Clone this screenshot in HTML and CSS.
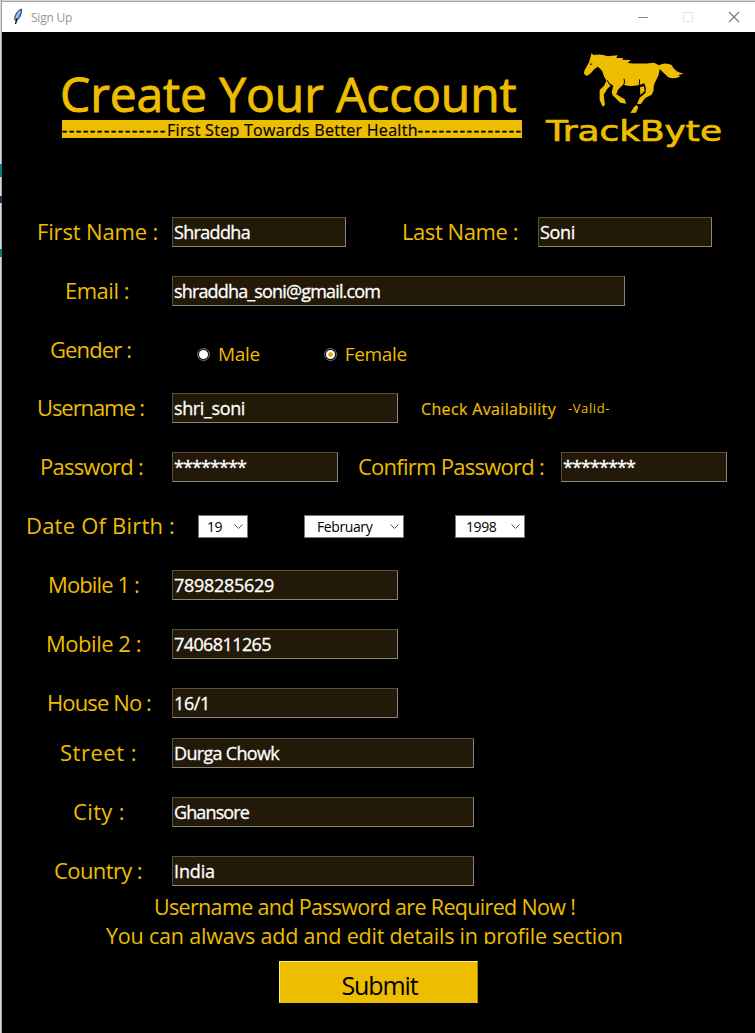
FILE: index.html
```html
<!DOCTYPE html>
<html lang="en">
<head>
<meta charset="utf-8">
<title>Sign Up</title>
<link rel="stylesheet" href="styles.css">
</head>
<body>
<div class="edge"><i class="mark m1"></i><i class="mark m2"></i><i class="mark m3"></i></div>
<div class="window">
  <header class="titlebar">
    <svg class="feather" width="10" height="17" viewBox="0 0 10 17"><path d="M8.500 1C5 2 1.600 6.500 1.500 11.500L3 13C6.500 11 9 6 8.500 1Z" fill="#4f8fdc" stroke="#222" stroke-width=".8"/><path d="M7 3L3 10.500" stroke="#b9d8ff" stroke-width="1.300"/><path d="M4 10.500L2.500 16" stroke="#000" stroke-width="1.200"/></svg>
    <span class="caption">Sign Up</span>
    <svg class="controls" width="110" height="12" viewBox="0 0 110 12" fill="none"><path d="M3 6.500H13" stroke="#888"/><path d="M48.500 1.500H57.500V10.500H48.500Z" stroke="#e6e6e6"/><path d="M94 1L104 11M104 1L94 11" stroke="#777" stroke-width="1.100"/></svg>
  </header>
  <main class="form">
    <div class="masthead">
      <div class="headings">
        <h1>Create Your Account</h1>
        <p class="tagline"><span class="dashes">---------------</span><span>First Step Towards Better Health</span><span class="dashes">---------------</span></p>
      </div>
      <svg class="logo" width="225" height="120" viewBox="0 0 225 120">
        <g transform="scale(.3333)" fill="#edbd00">
          <path d="M185 39L190 45Q214 40 233 49L263 46L259 54L279 54L277 59L302 60L293 69Q332 73 372 68L387 76Q405 65 425 75Q435 97 461 101L446 105L450 110Q428 119 414 111Q400 98 389 87Q388 105 379 119Q369 135 371 151L365 164L345 175L332 193L321 191L329 173L347 158Q350 145 343 130Q312 143 279 134L264 149L259 163L284 178L289 191L271 188L248 166L245 157L250 137L232 126Q221 111 216 92L204 80Q190 86 183 99L171 108L162 102L163 92L177 67Z"/>
          <path d="M231 119L242 137L232 146L221 165L225 195L218 200L209 180V150L222 137ZM330 142L342 139L344 153L331 165ZM320 195L325 202L318 218L301 219L312 201Z"/>
          <path d="M180 73L187 72M232 121Q235 134 247 138M282 116Q286 126 281 135M329 118L328 136" fill="none" stroke="#000" stroke-width="3"/>
        </g>
        <text class="brand" x="16" y="101" textLength="176" lengthAdjust="spacingAndGlyphs">TrackByte</text>
      </svg>
    </div>

    <div class="row"><label class="lab first-name">First Name :</label><div class="entry w174 s-shraddha">Shraddha</div><label class="lab last-name">Last Name :</label><div class="entry w174 s-soni">Soni</div></div>
    <div class="row"><label class="lab email">Email :</label><div class="entry w453 s-email">shraddha_soni@gmail.com</div></div>
    <div class="row"><label class="lab gender">Gender :</label><div class="radios"><i class="radio"></i><span class="opt">Male</span><i class="radio on"></i><span class="opt">Female</span></div></div>
    <div class="row up"><label class="lab username">Username :</label><div class="entry w226">shri_soni</div><span class="check">Check Availability</span><span class="valid">-Valid-</span></div>
    <div class="row"><label class="lab password">Password :</label><div class="entry w166 stars">********</div><label class="lab confirm">Confirm Password :</label><div class="entry w166 stars">********</div></div>
    <div class="row"><label class="lab birth">Date Of Birth :</label>
      <div class="select day">19<svg width="9" height="6"><path d="M.5 .5L4.500 4.500L8.500 .5"/></svg></div>
      <div class="select month">February<svg width="9" height="6"><path d="M.5 .5L4.500 4.500L8.500 .5"/></svg></div>
      <div class="select year">1998<svg width="9" height="6"><path d="M.5 .5L4.500 4.500L8.500 .5"/></svg></div></div>
    <div class="row"><label class="lab mobile1">Mobile 1 :</label><div class="entry w226 s-num1">7898285629</div></div>
    <div class="row"><label class="lab mobile2">Mobile 2 :</label><div class="entry w226 s-num2">7406811265</div></div>
    <div class="row short"><label class="lab house">House No :</label><div class="entry w226">16/1</div></div>
    <div class="row"><label class="lab street">Street :</label><div class="entry w302 s-durga">Durga Chowk</div></div>
    <div class="row"><label class="lab city">City :</label><div class="entry w302 s-ghansore">Ghansore</div></div>
    <div class="row last"><label class="lab country">Country :</label><div class="entry w302 s-india">India</div></div>
    <div class="note required">Username and Password are Required Now !</div>
    <div class="note hint">You can always add and edit details in profile section</div>
    <button class="submit">Submit</button>
  </main>
</div>
</body>
</html>
```
FILE: styles.css
```css
* { box-sizing: border-box; }
html, body { margin: 0; height: 1033px; overflow: hidden; }
body { display: flex; background: #d6d6d6; font-family: "Comic Sans MS", "Open Sans", sans-serif; color: #edbd00; white-space: nowrap; }
.edge { position: relative; width: 2px; flex: none; border-right: 1px solid #a5a5a5; }
.mark { position: absolute; left: 0; width: 2px; background: #087f7f; }
.m1 { top: 164px; height: 13px; }
.m2 { top: 196px; height: 7px; background: #203050; }
.m3 { top: 249px; height: 8px; }

.window { flex: 1; border-top: 1px solid #a5a5a5; margin-top: 1px; background: #000; }
.titlebar { height: 30px; background: #fff; display: flex; align-items: center; padding-left: 11px; }
.feather { margin-top: -2px; }
.caption { font: 12px "Open Sans", sans-serif; letter-spacing: -.24px; color: #999; margin-left: 8px; }
.controls { margin-left: auto; margin-right: 10px; }

.masthead { display: flex; height: 185px; }
.headings { width: 468px; padding: 34px 0 0 60px; margin-right: 60px; flex: none; }
h1 { margin: 0 0 0 -2px; font-size: 48px; font-weight: 400; line-height: 56px; height: 54px; letter-spacing: -.1px; -webkit-text-stroke: .9px #edbd00; }
.tagline { display: flex; margin: 0; width: 460px; height: 18px; background: #edbd00; color: #000; font-size: 16px; line-height: 20px; letter-spacing: .3px; -webkit-text-stroke: .2px #000; }
.dashes { width: 105px; letter-spacing: 1.850px; -webkit-text-stroke: .6px #000; }
.logo { margin-top: 8px; flex: none; }
.brand { font: 28px "DejaVu Sans", sans-serif; fill: #edbd00; stroke: #edbd00; stroke-width: .7px; }

.row { display: flex; height: 59px; align-items: flex-start; }
.up { margin-top: -1px; }
.short { height: 50px; }
.last { height: 36px; }

.lab { width: 170px; flex: none; font-size: 22px; line-height: 29px; height: 30px; text-indent: -1px; }
.first-name { padding-left: 36px; letter-spacing: -.16px; }
.last-name { width: 192px; padding-left: 57px; letter-spacing: -.43px; }
.email { padding-left: 64px; letter-spacing: -.49px; }
.gender { padding-left: 49px; letter-spacing: -.89px; }
.username { padding-left: 36px; letter-spacing: -1.080px; }
.password { padding-left: 39px; letter-spacing: -.77px; }
.confirm { width: 223px; padding-left: 21px; letter-spacing: -.74px; }
.birth { padding-left: 25px; letter-spacing: .21px; }
.mobile1 { padding-left: 47px; letter-spacing: -.87px; }
.mobile2 { padding-left: 45px; letter-spacing: -.47px; }
.house { padding-left: 46px; letter-spacing: -.88px; }
.street { padding-left: 59px; letter-spacing: .51px; }
.city { padding-left: 72px; letter-spacing: .37px; }
.country { padding-left: 53px; letter-spacing: -.6px; }

.entry { height: 30px; flex: none; background: #221909; border: 1px solid #8d8475; border-top-color: #5c5138; border-left-color: #5c5138; color: #fff; font-size: 18px; line-height: 29px; padding-left: 1px; letter-spacing: -.38px; -webkit-text-stroke: .3px #fff; }
.w166 { width: 166px; }
.w174 { width: 174px; }
.w226 { width: 226px; }
.w302 { width: 302px; }
.w453 { width: 453px; }
.s-shraddha { letter-spacing: -.67px; }
.s-soni { letter-spacing: -.32px; }
.s-email { letter-spacing: -.84px; }
.s-num1 { letter-spacing: -.29px; }
.s-num2 { letter-spacing: -.59px; }
.s-durga { letter-spacing: -.68px; }
.s-ghansore { letter-spacing: -.88px; }
.s-india { letter-spacing: -.13px; }
.stars { letter-spacing: -.91px; }

.radios { display: flex; align-items: center; height: 38px; padding-left: 26px; font-size: 19px; letter-spacing: -.33px; }
.radio { width: 11px; height: 11px; border-radius: 50%; background: #fff; border: 1px solid #000; outline: 1px solid #777; margin-right: 9px; }
.opt + .radio { margin-left: 65px; }
.on { background: radial-gradient(circle, #e0aa00 0 2px, #fff 2.500px); }
.check { font-size: 16px; line-height: 32px; margin-left: 23px; letter-spacing: .35px; -webkit-text-stroke: .2px #edbd00; }
.valid { font-size: 13px; line-height: 30px; margin-left: 12px; letter-spacing: .59px; }

.select { display: flex; align-items: center; justify-content: space-between; height: 23px; margin-top: 4px; background: #fff; border: 1px solid #777; color: #000; font-size: 14px; letter-spacing: -.4px; padding: 0 4px 0 8px; }
.select svg { fill: none; stroke: #555; }
.day { width: 50px; margin-left: 26px; }
.month { width: 100px; margin-left: 56px; padding-left: 12px; }
.year { width: 70px; margin-left: 51px; padding-left: 10px; }

.note { font-size: 21.500px; line-height: 30px; height: 30px; overflow: hidden; }
.required { padding-left: 152px; letter-spacing: -.67px; }
.hint { padding-left: 104px; height: 22px; line-height: 28px; letter-spacing: -.19px; }
.submit { display: block; width: 199px; height: 42px; margin: 17px 0 0 277px; padding: 6px 0 0 2px; border: 1px solid; border-color: #fff06a #a88600 #edbd00 #fff06a; background: #edbd00; color: #000; font: 25px/32px "Comic Sans MS", "Open Sans", sans-serif; letter-spacing: -1.120px; }
```
